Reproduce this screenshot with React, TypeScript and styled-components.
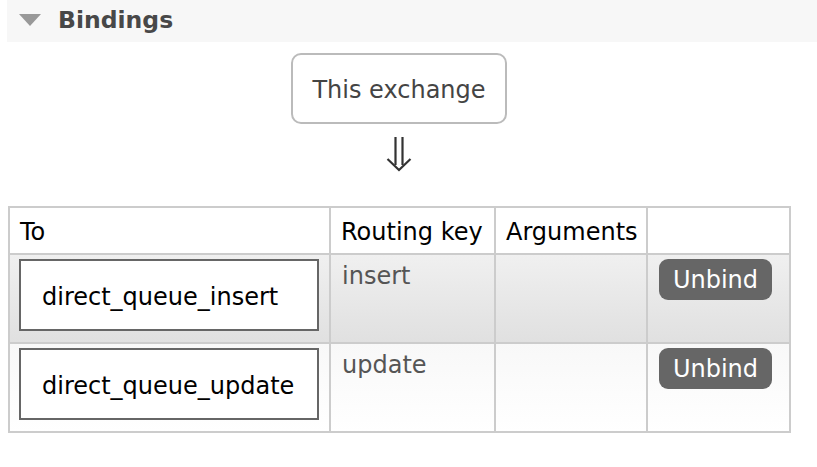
import React from "react";
import styled, { createGlobalStyle } from "styled-components";

const GlobalStyle = createGlobalStyle`
  html, body {
    margin: 0;
    padding: 0;
    background: #fff;
  }
  body {
    font-family: "DejaVu Sans", Verdana, sans-serif;
    font-size: 24px;
    color: #000;
  }
`;

interface Binding {
  queue: string;
  routingKey: string;
  args: string;
}

const bindings: Binding[] = [
  { queue: "direct_queue_insert", routingKey: "insert", args: "" },
  { queue: "direct_queue_update", routingKey: "update", args: "" },
];

const Page = styled.div`
  padding-left: 7px;
`;

const SectionHeader = styled.div`
  display: flex;
  align-items: center;
  height: 42px;
  padding: 0 0 3px 12px;
  box-sizing: border-box;
  background: #f7f7f7;
`;

const Toggle = styled.span`
  width: 0;
  height: 0;
  border-left: 11px solid transparent;
  border-right: 11px solid transparent;
  border-top: 12px solid #999;
  margin-right: 17px;
`;

const Title = styled.h2`
  margin: 0;
  font-size: 23.5px;
  font-weight: 700;
  color: #484848;
`;

const Flow = styled.div`
  width: 782px;
  margin-left: 1px;
  display: flex;
  flex-direction: column;
  align-items: center;
`;

const ExchangeBox = styled.div`
  margin-top: 11px;
  width: 212px;
  height: 65px;
  padding-top: 2px;
  border: 2px solid #bbb;
  border-radius: 10px;
  display: flex;
  align-items: center;
  justify-content: center;
  color: #444;
  white-space: nowrap;
`;

const Arrow = styled.svg`
  margin-top: 13px;
  display: block;
`;

const Table = styled.table`
  margin: 34px 0 0 1px;
  width: 783px;
  table-layout: fixed;
  border-collapse: collapse;
  border: 2px solid #ccc;
`;

const Th = styled.th`
  border: 2px solid #ccc;
  height: 42px;
  padding: 3px 10px 0;
  text-align: left;
  font-weight: 400;
  white-space: nowrap;
  background: #fff;
`;

const Row = styled.tr<{ $alt: boolean }>`
  background: ${(p) =>
    p.$alt
      ? "linear-gradient(#f8f8f8, #ffffff)"
      : "linear-gradient(#f0f0f0, #e0e0e0)"};
`;

const Td = styled.td`
  border: 2px solid #ccc;
  height: 87px;
  box-sizing: border-box;
  padding: 4px 10px 11px 10px;
  vertical-align: top;
  color: #555;
`;

const QueueBox = styled.div`
  width: 275px;
  height: 65px;
  padding: 3px 0 0 21px;
  border: 2px solid #666;
  background: #fff;
  display: flex;
  align-items: center;
  margin-left: -1px;
  color: #000;
  white-space: nowrap;
`;

const Key = styled.div`
  padding: 3px 0 0 1px;
`;

const UnbindButton = styled.button`
  font-family: inherit;
  font-size: 24px;
  color: #fff;
  background: #666;
  border: none;
  border-radius: 9px;
  width: 113px;
  height: 41px;
  margin-left: 1px;
  padding: 1px 0 0;
  cursor: pointer;
`;

export default function App() {
  return (
    <>
      <GlobalStyle />
      <Page>
        <SectionHeader>
          <Toggle />
          <Title>Bindings</Title>
        </SectionHeader>
        <Flow>
          <ExchangeBox>This exchange</ExchangeBox>
          <Arrow width="26" height="35" viewBox="0 0 26 35">
            <g fill="none" stroke="#333" strokeWidth="2.2">
              <path d="M9.5 0 V28" />
              <path d="M16.5 0 V28" />
              <path d="M1.5 22 L13 33 L24.5 22" strokeLinejoin="miter" />
            </g>
          </Arrow>
        </Flow>
        <Table>
          <colgroup>
            <col style={{ width: 321 }} />
            <col style={{ width: 165 }} />
            <col style={{ width: 152 }} />
            <col style={{ width: 143 }} />
          </colgroup>
          <thead>
            <tr>
              <Th>To</Th>
              <Th>Routing key</Th>
              <Th>Arguments</Th>
              <Th />
            </tr>
          </thead>
          <tbody>
            {bindings.map((b, i) => (
              <Row key={b.queue} $alt={i % 2 === 1}>
                <Td>
                  <QueueBox>{b.queue}</QueueBox>
                </Td>
                <Td>
                  <Key>{b.routingKey}</Key>
                </Td>
                <Td>{b.args}</Td>
                <Td>
                  <UnbindButton>Unbind</UnbindButton>
                </Td>
              </Row>
            ))}
          </tbody>
        </Table>
      </Page>
    </>
  );
}
